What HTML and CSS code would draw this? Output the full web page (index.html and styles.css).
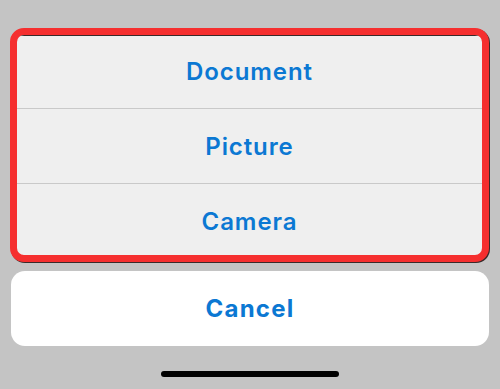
FILE: index.html
```html
<!DOCTYPE html>
<html>
<head>
<meta charset="utf-8">
<link rel="stylesheet" href="styles.css">
</head>
<body>
<div class="screen">
  <div class="sheet">
    <div class="group">
      <div class="item item-first">Document</div>
      <div class="item">Picture</div>
      <div class="item item-last">Camera</div>
    </div>
  </div>
  <div class="cancel">Cancel</div>
  <div class="home-row"><div class="home"></div></div>
</div>
</body>
</html>
```
FILE: styles.css
```css
html, body {
  margin: 0;
  padding: 0;
  background: #c4c4c4;
}
.screen {
  width: 500px;
  height: 389px;
  display: flex;
  flex-direction: column;
  padding-top: 28px;
  box-sizing: border-box;
  font-family: Inter, "Noto Sans", sans-serif;
}
.sheet {
  margin: 0 11px 0 10px;
  border: 7px solid #f52f2f;
  border-radius: 14px;
  background: #efefef;
  overflow: hidden;
  box-shadow: 1px 1px 0 #3a2a2a;
}
.group {
  border-top: 1px solid #3a2a2a;
  display: flex;
  flex-direction: column;
}
.item {
  height: 75px;
  display: flex;
  align-items: center;
  justify-content: center;
  color: #0b78d3;
  font-size: 24px;
  font-weight: 600;
  letter-spacing: 0.9px;
  border-bottom: 1px solid #c9c9c9;
  box-sizing: border-box;
}
.item-first {
  height: 73px;
  padding-bottom: 2px;
}
.item-last {
  height: 71px;
  padding-top: 3px;
  border-bottom: none;
}
.cancel {
  margin: 9px 11px 0 11px;
  height: 75px;
  background: #ffffff;
  border-radius: 14px;
  display: flex;
  align-items: center;
  justify-content: center;
  color: #0b78d3;
  font-size: 24px;
  font-weight: 700;
  letter-spacing: 1.2px;
}
.home-row {
  display: flex;
  justify-content: center;
  padding-top: 25px;
}
.home {
  width: 178px;
  height: 6px;
  border-radius: 3px;
  background: #000;
}
```
